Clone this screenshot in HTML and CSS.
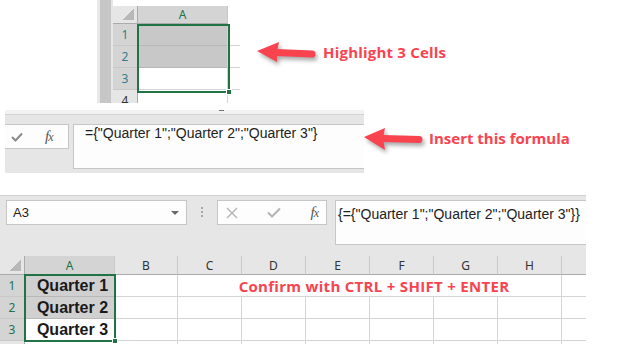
FILE: index.html
```html
<html>
  <head>
    <meta charset="utf-8" />
    <title>Array constant</title>
    <link rel="stylesheet" href="styles.css">
  </head>
  <body>
    <div class="page">
      <!-- step 1: select the cells -->
      <div class="shot1">
        <div class="edge"></div>
        <div class="mini">
          <div class="corner"></div>
          <div class="hd sel">A</div>
          <div class="blank"></div>

          <div class="rh sel teal">1</div>
          <div class="c shade"></div>
          <div class="c open"></div>

          <div class="rh sel teal">2</div>
          <div class="c shade"></div>
          <div class="c open"></div>

          <div class="rh sel teal">3</div>
          <div class="c"></div>
          <div class="c open"></div>

          <div class="rh">4</div>
          <div class="c"></div>
          <div class="c open"></div>

          <div class="selbox small"><span class="handle"></span></div>
        </div>
        <div class="note note1">
          <svg class="arrow" width="62" height="24" viewBox="0 0 62 24">
            <path d="M21 12.5 L57 14" stroke="#f9434f" stroke-width="7" stroke-linecap="round" />
            <path d="M2 11 L24 2 L22 12 L22 22 Z" fill="#f9434f" />
          </svg>
          <span class="label">Highlight 3 Cells</span>
        </div>
      </div>

      <!-- step 2: the formula -->
      <div class="shot2">
        <div class="panel">
          <div class="ribbon-edge"><span class="dash"></span></div>
          <div class="bar">
            <div class="btns first">
              <svg width="12" height="10" viewBox="0 0 12 10">
                <path d="M1 5 L4.5 8.5 L11 1.5" fill="none" stroke="#8a8a8a" stroke-width="2" />
              </svg>
              <span class="fx">f<i>x</i></span>
            </div>
            <div class="formula">={"Quarter 1";"Quarter 2";"Quarter 3"}</div>
          </div>
        </div>
        <div class="note note2">
          <svg class="arrow" width="62" height="24" viewBox="0 0 62 24">
            <path d="M21 12.5 L57 13.5" stroke="#f9434f" stroke-width="7" stroke-linecap="round" />
            <path d="M2 11 L23 2 L21 12.5 L23 24 Z" fill="#f9434f" />
          </svg>
          <span class="label">Insert this formula</span>
        </div>
      </div>

      <!-- step 3: the result -->
      <div class="shot3">
        <div class="toolbar">
          <div class="namebox">
            <span>A3</span>
            <span class="drop"></span>
          </div>
          <div class="grip"><span></span></div>
          <div class="btns">
            <svg width="12" height="12" viewBox="0 0 12 12">
              <path d="M1 1 L11 11 M11 1 L1 11" stroke="#b4b4b4" stroke-width="1.4" />
            </svg>
            <svg width="14" height="11" viewBox="0 0 14 11">
              <path d="M1 5.5 L5 9.5 L13 1.5" fill="none" stroke="#b4b4b4" stroke-width="2" />
            </svg>
            <span class="fx">f<i>x</i></span>
          </div>
          <div class="formula wide">{={"Quarter 1";"Quarter 2";"Quarter 3"}}</div>
        </div>
        <div class="sheet">
          <div class="corner"></div>
          <div class="hd sel">A</div>
          <div class="hd">B</div>
          <div class="hd">C</div>
          <div class="hd">D</div>
          <div class="hd">E</div>
          <div class="hd">F</div>
          <div class="hd">G</div>
          <div class="hd">H</div>
          <div class="hd end"></div>

          <div class="rh sel">1</div>
          <div class="c shade val">Quarter 1</div>
          <div class="c"></div>
          <div class="c merged">Confirm with CTRL + SHIFT + ENTER</div>
          <div class="c open"></div>

          <div class="rh sel">2</div>
          <div class="c shade val">Quarter 2</div>
          <div class="c"></div><div class="c"></div><div class="c"></div><div class="c"></div>
          <div class="c"></div><div class="c"></div><div class="c"></div>
          <div class="c open"></div>

          <div class="rh sel">3</div>
          <div class="c val">Quarter 3</div>
          <div class="c"></div><div class="c"></div><div class="c"></div><div class="c"></div>
          <div class="c"></div><div class="c"></div><div class="c"></div>
          <div class="c open"></div>

          <div class="rh">4</div>
          <div class="c"></div>
          <div class="c"></div><div class="c"></div><div class="c"></div><div class="c"></div>
          <div class="c"></div><div class="c"></div><div class="c"></div>
          <div class="c open"></div>

          <div class="selbox big"><span class="handle"></span></div>
        </div>
      </div>
    </div>
  </body>
</html>
```

FILE: styles.css
```css
* {
  box-sizing: border-box;
}

body {
  margin: 0;
  background: #fff;
  font-family: "Liberation Sans", Arial, sans-serif;
}

.page {
  width: 633px;
  height: 344px;
  overflow: hidden;
}

/* shared sheet bits */
.corner {
  background: #e6e6e6 linear-gradient(to bottom right, transparent 50%, #b8b8b8 50%) no-repeat;
  background-size: 11px 11px;
  background-position: right 3px bottom 3px;
  border-right: 1px solid #ababab;
  border-bottom: 1px solid #ababab;
}
.hd {
  display: flex;
  align-items: center;
  justify-content: center;
  background: #e6e6e6;
  border-right: 1px solid #c8c8c8;
  border-bottom: 1px solid #ababab;
  font-family: "Noto Sans", sans-serif;
  font-size: 12px;
  color: #333;
}
.rh {
  display: flex;
  align-items: center;
  justify-content: center;
  background: #e6e6e6;
  border-right: 1px solid #ababab;
  border-bottom: 1px solid #c8c8c8;
  font-family: "Noto Sans", sans-serif;
  font-size: 12px;
  color: #333;
}
.hd.sel,
.rh.sel {
  background: #d4d4d4;
  color: #217346;
}
.rh.teal {
  color: #2f7f8c;
}
.c {
  border-right: 1px solid #d4d4d4;
  border-bottom: 1px solid #d4d4d4;
}
.c.open {
  border-right: none;
}
.c.shade {
  background: #d0d0d0;
  border-bottom-color: #b8b8b8;
}
.blank {
  background: #fff;
}
.selbox {
  position: absolute;
  border: 2px solid #217346;
}
.handle {
  position: absolute;
  right: -4px;
  bottom: -4px;
  width: 6px;
  height: 6px;
  background: #217346;
  border: 1px solid #fff;
}

/* annotations */
.note {
  display: flex;
  align-items: center;
  align-self: flex-start;
}
.arrow {
  filter: drop-shadow(2px 3px 2px rgba(0, 0, 0, 0.35));
}
.label {
  font-family: "Open Sans", sans-serif;
  font-weight: bold;
  font-size: 15px;
  color: #f9434f;
  white-space: nowrap;
}

/* shot 1 */
.shot1 {
  display: flex;
  height: 103px;
  padding-left: 97px;
}
.edge {
  width: 16px;
  background: linear-gradient(to right, #e8e8e8 0 3px, #c6c6c6 3px 14px, #e6e6e6 14px);
}
.mini {
  position: relative;
  width: 127px;
  height: 103px;
  overflow: hidden;
  padding-top: 6px;
  display: grid;
  grid-template-columns: 25px 90px 12px;
  grid-template-rows: 18px repeat(4, 22px);
}
.mini .c.shade {
  background: #c8c8c8;
}
.selbox.small {
  left: 24px;
  top: 24px;
  width: 93px;
  height: 69px;
}
.note1 {
  margin: 40px 0 0 15px;
}
.note1 .label {
  margin-left: 6px;
  letter-spacing: 0.2px;
}

/* shot 2 */
.shot2 {
  display: flex;
  margin-top: 7px;
}
.panel {
  position: relative;
  width: 359px;
  height: 63px;
  margin-left: 5px;
  background: #e6e6e6;
}
.ribbon-edge {
  height: 5px;
  background: #f2f2f2;
  border-bottom: 1px solid #d4d4d4;
}
.dash {
  position: absolute;
  left: 214px;
  top: 0;
  width: 5px;
  height: 1px;
  background: #707070;
}
.bar {
  display: flex;
  align-items: flex-start;
  gap: 4px;
  padding-top: 9px;
}
.btns {
  display: flex;
  align-items: center;
  justify-content: space-around;
  height: 25px;
  background: #fdfdfd;
  border: 1px solid #c6c6c6;
}
.btns.first {
  width: 64px;
  border-left: none;
  justify-content: flex-start;
  gap: 22px;
  padding-left: 6px;
}
.fx {
  font-family: "Liberation Serif", serif;
  font-style: italic;
  font-size: 15px;
  color: #555;
  letter-spacing: -1px;
}
.fx i {
  font-size: 12px;
}
.formula {
  flex: 1;
  height: 45px;
  background: #fdfdfd;
  border: 1px solid #c6c6c6;
  border-right: none;
  padding: 0 0 0 11px;
  font-size: 14px;
  line-height: 16px;
  color: #222;
  white-space: nowrap;
  overflow: hidden;
}
.note2 {
  margin: 16px 0 0 -2px;
}
.note2 .label {
  margin-left: 5px;
}

/* shot 3 */
.shot3 {
  width: 586px;
  margin-top: 22px;
}
.toolbar {
  display: flex;
  align-items: flex-start;
  height: 61px;
  padding: 4px 0 0 6px;
  background: #e6e6e6;
  border-top: 1px solid #d2d2d2;
}
.namebox {
  display: flex;
  align-items: center;
  justify-content: space-between;
  width: 181px;
  height: 25px;
  padding: 0 7px 0 6px;
  background: #fdfdfd;
  border: 1px solid #c6c6c6;
  font-size: 13px;
  color: #222;
}
.drop {
  border-left: 4px solid transparent;
  border-right: 4px solid transparent;
  border-top: 4px solid #6a6a6a;
}
.grip {
  display: flex;
  justify-content: center;
  width: 30px;
  padding-top: 7px;
}
.grip span {
  width: 2px;
  height: 11px;
  background: repeating-linear-gradient(to bottom, #a8a8a8 0 2px, transparent 2px 4px);
}
.toolbar .btns {
  width: 110px;
  margin-right: 8px;
  padding: 0 8px;
  justify-content: space-between;
}
.formula.wide {
  padding: 5px 0 0 2px;
}
.sheet {
  position: relative;
  height: 88px;
  overflow: hidden;
  background: #e6e6e6;
  display: grid;
  grid-template-columns: 25px 90px 63px repeat(6, 64px) 1fr;
  grid-template-rows: 19px repeat(4, 22px);
}
.sheet .c {
  background: #fff;
}
.sheet .c.shade {
  background: #d0d0d0;
}
.hd.end {
  border-right: none;
}
.val {
  display: flex;
  align-items: center;
  justify-content: center;
  padding-left: 6px;
  font-weight: bold;
  font-size: 16px;
  color: #1a1a1a;
}
.merged {
  grid-column: span 6;
  display: flex;
  align-items: center;
  justify-content: center;
  padding-left: 9px;
  font-family: "Open Sans", sans-serif;
  font-weight: bold;
  font-size: 15px;
  letter-spacing: 0.3px;
  color: #f9434f;
  white-space: nowrap;
}
.selbox.big {
  left: 24px;
  top: 18px;
  width: 92px;
  height: 68px;
}
```
